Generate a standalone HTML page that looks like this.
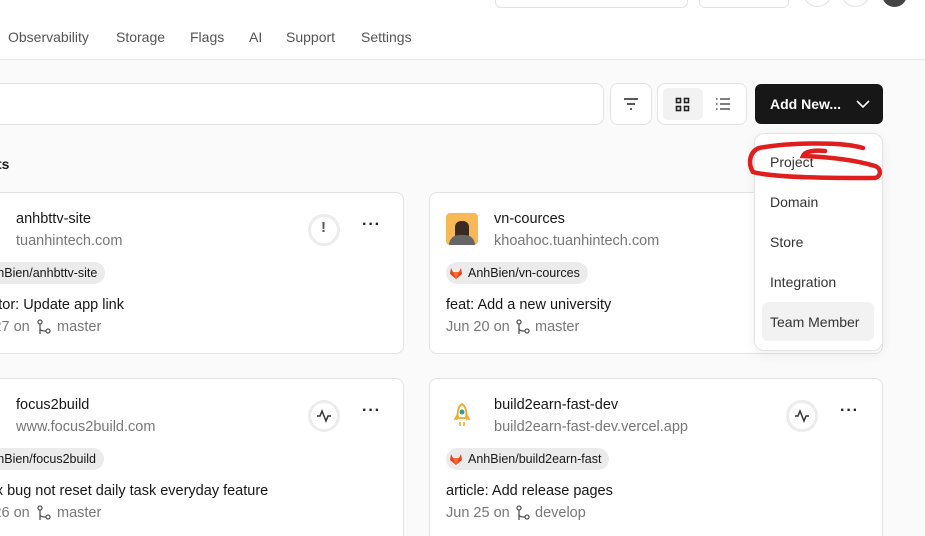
<!DOCTYPE html>
<html><head><meta charset="utf-8"><style>
*{box-sizing:border-box;margin:0;padding:0}
html,body{width:925px;height:536px;overflow:hidden}
body{background:#fafafa;font-family:"Liberation Sans",sans-serif;color:#171717}
#w{position:relative;width:925px;height:536px;overflow:hidden}
.a{position:absolute}
.hdr{left:0;top:0;width:925px;height:60px;background:#fff;border-bottom:1px solid #e6e6e6}
.nav{top:29px;font-size:14px;color:#555}
.card{background:#fff;border:1px solid #e3e3e3;border-radius:8px;height:162px}
.t{font-size:14.5px;color:#171717;white-space:nowrap}
.s{font-size:14.5px;color:#777;white-space:nowrap}
.pill{height:22px;border-radius:11px;background:#ebebeb;font-size:12.5px;line-height:22px;padding:0 8px 0 22px;white-space:nowrap;color:#171717}
.circ{width:32px;height:32px;border-radius:50%;border:3px solid #ececec;background:#fff}
.dots{font-size:16px;font-weight:bold;letter-spacing:1px;color:#222}
.mi{left:16px;font-size:14px;color:#333}
</style></head><body><div id="w">
<div class="a hdr"></div>
<div class="a" style="left:495px;top:-10px;width:193px;height:18px;border:1px solid #e3e3e3;border-radius:6px;background:#fff"></div>
<div class="a" style="left:699px;top:-10px;width:90px;height:18px;border:1px solid #e3e3e3;border-radius:6px;background:#fff"></div>
<div class="a" style="left:803px;top:-22px;width:29px;height:29px;border:1px solid #e3e3e3;border-radius:50%"></div>
<div class="a" style="left:841px;top:-22px;width:29px;height:29px;border:1px solid #e3e3e3;border-radius:50%"></div>
<div class="a" style="left:882px;top:-18px;width:25px;height:25px;background:#444;border-radius:50%"></div>
<div class="a nav" style="left:8px">Observability</div>
<div class="a nav" style="left:116px">Storage</div>
<div class="a nav" style="left:190px">Flags</div>
<div class="a nav" style="left:249px">AI</div>
<div class="a nav" style="left:286px">Support</div>
<div class="a nav" style="left:361px">Settings</div>

<div class="a" style="left:-10px;top:83px;width:614px;height:42px;background:#fff;border:1px solid #e3e3e3;border-radius:8px"></div>
<div class="a" style="left:610px;top:83px;width:42px;height:42px;background:#fff;border:1px solid #e3e3e3;border-radius:8px"></div>
<svg class="a" style="left:622px;top:96px" width="18" height="16"><path d="M2 3h14M5 8h8M8 13h2" stroke="#222" stroke-width="1.6"/></svg>
<div class="a" style="left:657px;top:83px;width:90px;height:42px;background:#fff;border:1px solid #e3e3e3;border-radius:8px"></div>
<div class="a" style="left:663px;top:88px;width:40px;height:32px;background:#f2f2f2;border-radius:5px"></div>
<svg class="a" style="left:675px;top:97px" width="16" height="16"><g fill="none" stroke="#222" stroke-width="1.6"><rect x="1.5" y="1.5" width="4" height="4"/><rect x="9.5" y="1.5" width="4" height="4"/><rect x="1.5" y="9.5" width="4" height="4"/><rect x="9.5" y="9.5" width="4" height="4"/></g></svg>
<svg class="a" style="left:715px;top:97px" width="16" height="14"><g stroke="#555" stroke-width="1.5"><path d="M5 2h10M5 7h10M5 12h10"/><path d="M1 2h1.5M1 7h1.5M1 12h1.5"/></g></svg>
<div class="a" style="left:755px;top:84px;width:128px;height:40px;background:#171717;border-radius:6px"></div>
<div class="a" style="left:770px;top:96px;color:#fff;font-weight:bold;font-size:14px">Add New...</div>
<svg class="a" style="left:856px;top:99px" width="14" height="10"><path d="M1 2l6 6 6-6" stroke="#fff" stroke-width="1.6" fill="none"/></svg>

<div class="a" style="left:-3px;top:156px;font-weight:bold;font-size:14px">ts</div>

<div class="a card" style="left:-49px;top:192px;width:453px"></div>
<div class="a t" style="left:16px;top:211px">anhbttv-site</div>
<div class="a s" style="left:16px;top:233px">tuanhintech.com</div>
<div class="a pill" style="left:-40px;top:262px">AnhBien/anhbttv-site</div>
<div class="a t" style="left:-34px;top:297px">refactor: Update app link</div>
<div class="a s" style="left:-34px;top:319px">Jun 27 on</div>
<div class="a s" style="left:57px;top:319px">master</div>
<div class="a circ" style="left:308px;top:214px"></div>
<div class="a" style="left:321px;top:219px;font-weight:bold;font-size:15px;color:#555">!</div>
<div class="a dots" style="left:362px;top:216px">···</div>

<div class="a card" style="left:429px;top:192px;width:454px"></div>
<div class="a" style="left:446px;top:213px;width:32px;height:32px;background:#f7b955;border-radius:4px;overflow:hidden"><div style="margin:8px auto 0;width:14px;height:16px;background:#3a2a20;border-radius:6px 6px 2px 2px"></div><div style="margin:-2px auto 0;width:26px;height:14px;background:#666;border-radius:10px 10px 0 0"></div></div>
<div class="a t" style="left:494px;top:211px">vn-cources</div>
<div class="a s" style="left:494px;top:233px">khoahoc.tuanhintech.com</div>
<div class="a pill" style="left:446px;top:262px">AnhBien/vn-cources</div>
<div class="a t" style="left:446px;top:297px">feat: Add a new university</div>
<div class="a s" style="left:446px;top:319px">Jun 20 on</div>
<div class="a s" style="left:535px;top:319px">master</div>

<div class="a card" style="left:-49px;top:378px;width:453px;height:200px"></div>
<div class="a t" style="left:16px;top:397px">focus2build</div>
<div class="a s" style="left:16px;top:419px">www.focus2build.com</div>
<div class="a pill" style="left:-40px;top:448px">AnhBien/focus2build</div>
<div class="a t" style="left:-34px;top:483px">fix: fix bug not reset daily task everyday feature</div>
<div class="a s" style="left:-34px;top:505px">Jun 26 on</div>
<div class="a s" style="left:57px;top:505px">master</div>
<div class="a circ" style="left:308px;top:400px"></div>
<div class="a dots" style="left:362px;top:402px">···</div>

<div class="a card" style="left:429px;top:378px;width:454px;height:200px"></div>
<svg class="a" style="left:452px;top:402px" width="20" height="28"><path d="M10 2c4 3 5 8 4 14h-8c-1-6 0-11 4-14z" fill="none" stroke="#f5a623" stroke-width="1.8"/><circle cx="10" cy="10" r="2.5" fill="#3a9a8a"/><path d="M6 12l-3 5h3M14 12l3 5h-3M8 20v4M12 20v4" stroke="#f5a623" stroke-width="1.6" fill="none"/></svg>
<div class="a t" style="left:494px;top:397px">build2earn-fast-dev</div>
<div class="a s" style="left:494px;top:419px">build2earn-fast-dev.vercel.app</div>
<div class="a pill" style="left:446px;top:448px">AnhBien/build2earn-fast</div>
<div class="a t" style="left:446px;top:483px">article: Add release pages</div>
<div class="a s" style="left:446px;top:505px">Jun 25 on</div>
<div class="a s" style="left:535px;top:505px">develop</div>
<div class="a circ" style="left:786px;top:400px"></div>
<div class="a dots" style="left:840px;top:402px">···</div>

<svg class="a" style="left:316px;top:408px" width="16" height="16"><path d="M1 8h3l2-5 4 10 2-5h3" fill="none" stroke="#333" stroke-width="1.5"/></svg>
<svg class="a" style="left:794px;top:408px" width="16" height="16"><path d="M1 8h3l2-5 4 10 2-5h3" fill="none" stroke="#333" stroke-width="1.5"/></svg>

<svg width="0" height="0" style="position:absolute"><defs><g id="gl"><path d="M7 13L1 8l1-6 2 4h6l2-4 1 6z" fill="#e24329"/><path d="M7 13L4 6h6z" fill="#fc6d26"/></g><g id="br" fill="none" stroke="#555" stroke-width="1.3"><circle cx="4" cy="3" r="2"/><circle cx="12" cy="12" r="2"/><path d="M4 5v10M4 9c0 3 3 3 6 3"/></g></defs></svg>
<svg class="a" style="left:449px;top:266px" width="14" height="14"><use href="#gl"/></svg>
<svg class="a" style="left:449px;top:452px" width="14" height="14"><use href="#gl"/></svg>
<svg class="a" style="left:-37px;top:266px" width="14" height="14"><use href="#gl"/></svg>
<svg class="a" style="left:-37px;top:452px" width="14" height="14"><use href="#gl"/></svg>
<svg class="a" style="left:36px;top:319px" width="16" height="17"><use href="#br"/></svg>
<svg class="a" style="left:36px;top:505px" width="16" height="17"><use href="#br"/></svg>
<svg class="a" style="left:515px;top:319px" width="16" height="17"><use href="#br"/></svg>
<svg class="a" style="left:515px;top:505px" width="16" height="17"><use href="#br"/></svg>

<div class="a" style="left:754px;top:133px;width:129px;height:218px;background:#fff;border:1px solid #e3e3e3;border-radius:10px;box-shadow:0 4px 12px rgba(0,0,0,.06)"></div>
<div class="a" style="left:762px;top:302px;width:112px;height:39px;background:#f2f2f2;border-radius:6px"></div>
<div class="a mi" style="left:770px;top:154px">Project</div>
<div class="a mi" style="left:770px;top:194px">Domain</div>
<div class="a mi" style="left:770px;top:234px">Store</div>
<div class="a mi" style="left:770px;top:274px">Integration</div>
<div class="a mi" style="left:770px;top:314px">Team Member</div>
<svg class="a" style="left:745px;top:138px" width="140" height="48"><path d="M118 10C95 3 40 5 14 10C4 14 3 26 8 34C30 40 90 40 130 40C137 38 136 30 130 28C110 22 85 19 58 18C60 13 70 12 80 13" fill="none" stroke="#e01e1e" stroke-width="4.5" stroke-linecap="round"/></svg>
</div></body></html>
